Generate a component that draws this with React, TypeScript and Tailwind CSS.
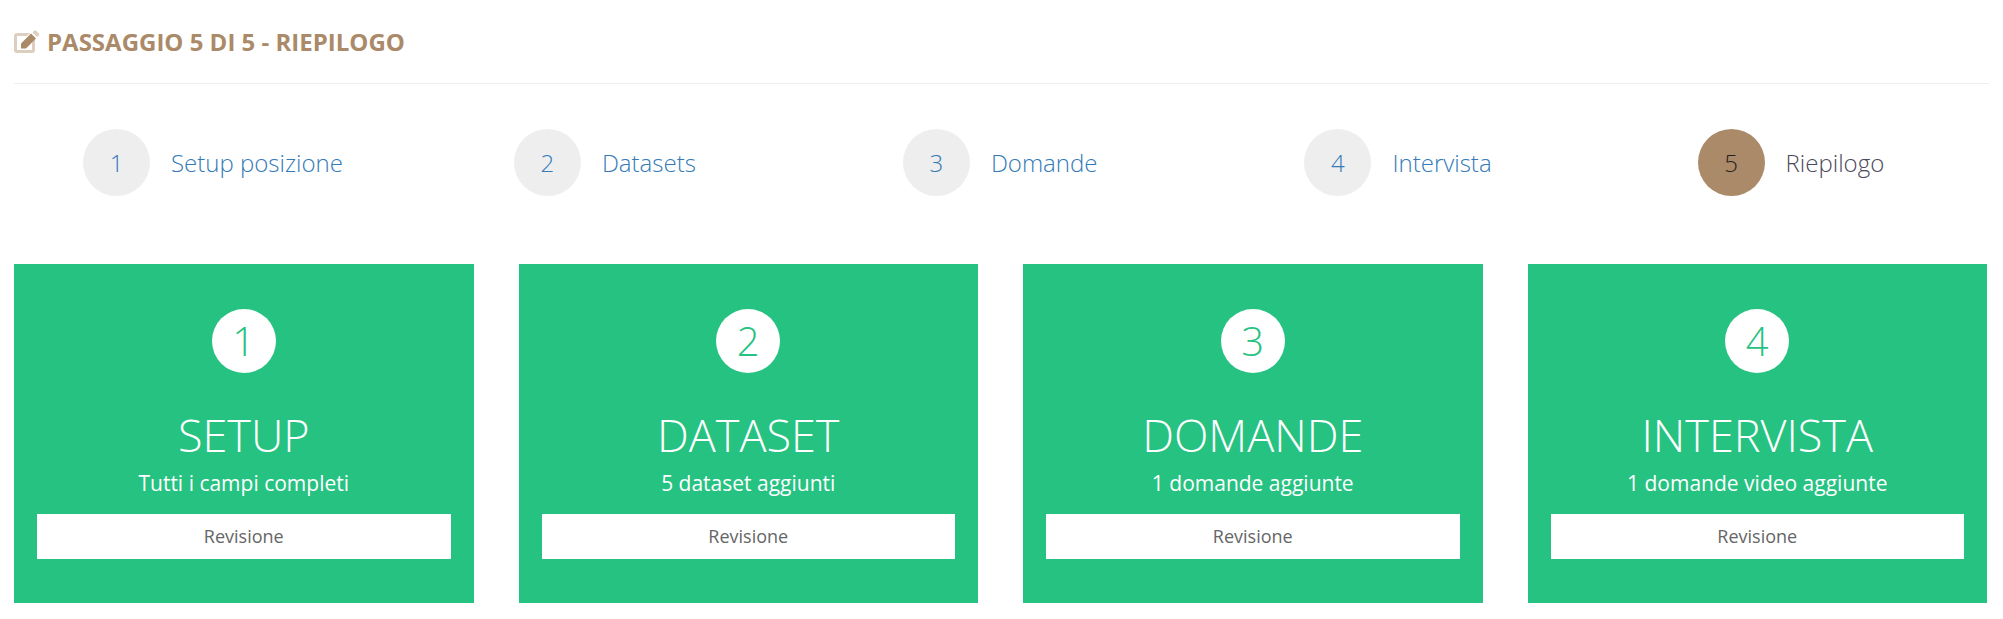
import React from "react";

const steps = [
  { n: 1, label: "Setup posizione", cls: "ml-[69px]" },
  { n: 2, label: "Datasets", cls: "ml-[171px]" },
  { n: 3, label: "Domande", cls: "ml-[207px]" },
  { n: 4, label: "Intervista", cls: "ml-[207px]" },
  { n: 5, label: "Riepilogo", cls: "ml-[206px]", active: true },
];

const cards = [
  { n: 1, title: "SETUP", sub: "Tutti i campi completi" },
  { n: 2, title: "DATASET", sub: "5 dataset aggiunti" },
  { n: 3, title: "DOMANDE", sub: "1 domande aggiunte" },
  { n: 4, title: "INTERVISTA", sub: "1 domande video aggiunte" },
];

export default function App() {
  return (
    <div className="w-[2003px] h-[619px] bg-white overflow-hidden px-[14px] font-['Open_Sans',sans-serif]">
      <div className="h-[84px] border-b border-[#eeeeee] flex items-center">
        <svg width="26" height="24" viewBox="0 0 26 24" className="shrink-0">
          <path d="M3 3h13l-3 3H3.500a.5.5 0 0 0-.5.5v13a.5.5 0 0 0 .5.5h14a.5.5 0 0 0 .5-.5V12l3-3v11a3 3 0 0 1-3 3H3a3 3 0 0 1-3-3V6a3 3 0 0 1 3-3z" fill="#dccfbf" />
          <path d="M7 13.500 17 3.500l5 5-10 10H7z" fill="#aa8a68" />
          <path d="M18.500 2.500l2-2a1 1 0 0 1 1.400 0l3.200 3.200a1 1 0 0 1 0 1.400l-2 2z" fill="#dccfbf" />
        </svg>
        <h1 className="ml-[7px] text-[24px] leading-[27px] font-bold text-[#aa8a68] uppercase">Passaggio 5 di 5 - Riepilogo</h1>
      </div>

      <div className="flex items-center h-[67px] mt-[45px]">
        {steps.map((s) => (
          <div key={s.n} className={`flex items-center shrink-0 ${s.cls}`}>
            <div
              className={`w-[67px] h-[67px] rounded-full flex items-center justify-center text-[24px] font-light ${
                s.active ? "bg-[#aa8a68] text-[#222222]" : "bg-[#eeeeee] text-[#337ab7]"
              }`}
            >
              {s.n}
            </div>
            <span className={`ml-[21px] text-[24px] leading-[33px] font-light ${s.active ? "text-[#4a4a5a]" : "text-[#337ab7]"}`}>
              {s.label}
            </span>
          </div>
        ))}
      </div>

      <div className="flex gap-[45px] mt-[68px]">
        {cards.map((c) => (
          <div key={c.n} className="w-[459.5px] h-[339px] bg-[#26c281] flex flex-col items-center pt-[45px] px-[23px] text-white">
            <div className="w-[64px] h-[64px] rounded-full bg-white flex items-center justify-center text-[#26c281] text-[40px] font-light">
              {c.n}
            </div>
            <div className="mt-[31px] text-[45px] leading-[62px] font-light">{c.title}</div>
            <div className="mt-[3px] text-[21px] leading-[29px]">{c.sub}</div>
            <button className="mt-[16px] w-full h-[45px] bg-white text-[#666666] text-[18px]">Revisione</button>
          </div>
        ))}
      </div>
    </div>
  );
}
